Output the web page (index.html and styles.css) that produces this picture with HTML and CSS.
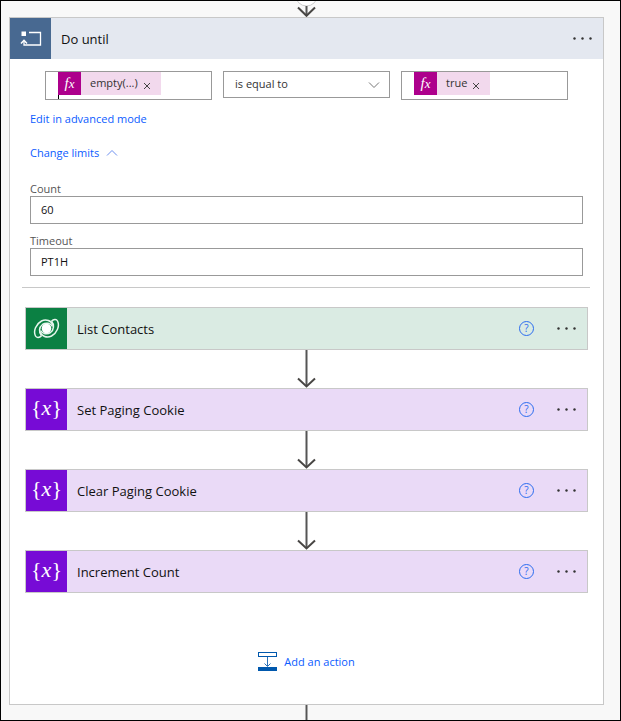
FILE: index.html
```html
<!DOCTYPE html>
<html lang="en">
<head>
  <meta charset="UTF-8" />
  <meta name="viewport" content="width=device-width, initial-scale=1.0" />
  <title>Do until</title>
  <link rel="stylesheet" href="styles.css">
</head>
<body>
<main class="canvas">

  <div class="flow-in">
    <svg width="19" height="16" viewBox="0 0 19 16">
      <circle cx="9.500" cy="-6" r="11" fill="#fff" stroke="#ccc" />
      <path d="M9.500 5v10" stroke="#555" stroke-width="2" />
      <path d="M1 6.500 9.500 14.800l8.500-8.300" fill="none" stroke="#484644" stroke-width="2" />
    </svg>
  </div>

  <section class="scope">
    <header class="scope-header">
      <span class="icon icon-loop">
        <svg width="41" height="41" viewBox="0 0 41 41">
          <path d="M19 14.500h11.500v12.500H14v-4" fill="none" stroke="#fff" stroke-width="1.300" />
          <path d="M11 25.500l3-3.200 3 3.200" fill="none" stroke="#fff" stroke-width="1.500" />
          <rect x="11.500" y="13.500" width="4.500" height="4.500" fill="#fff" />
        </svg>
      </span>
      <h1 class="title">Do until</h1>
      <button class="more" aria-label="More commands">
        <svg width="20" height="4" viewBox="0 0 20 4" fill="#333"><circle cx="1.500" cy="1.500" r="1.200" /><circle cx="9.500" cy="1.500" r="1.200" /><circle cx="17.500" cy="1.500" r="1.200" /></svg>
      </button>
    </header>

    <!-- Loop condition -->
    <div class="condition">
      <div class="token-box">
        <span class="token">
          <span class="token-fx"><i>f</i><i class="sub">x</i></span>
          <span class="token-text">empty(...)</span>
          <button class="token-remove" aria-label="Remove empty">
            <svg width="8" height="8" viewBox="0 0 8 8"><path d="M1 1l6 6M7 1l-6 6" stroke="#444" /></svg>
          </button>
        </span>
        <span class="caret"></span>
      </div>
      <div class="operator">
        <select class="operator-select" aria-label="Operator">
          <option>is equal to</option>
          <option>is not equal to</option>
        </select>
        <svg class="chevron" width="12" height="8" viewBox="0 0 12 8"><path d="M1 1.500l5 5 5-5" fill="none" stroke="#777" /></svg>
      </div>
      <div class="token-box">
        <span class="token">
          <span class="token-fx"><i>f</i><i class="sub">x</i></span>
          <span class="token-text">true</span>
          <button class="token-remove" aria-label="Remove true">
            <svg width="8" height="8" viewBox="0 0 8 8"><path d="M1 1l6 6M7 1l-6 6" stroke="#444" /></svg>
          </button>
        </span>
      </div>
    </div>

    <!-- Limits -->
    <div class="limits">
      <a class="link" href="#">Edit in advanced mode</a>
      <a class="link link-limits" href="#">Change limits
        <svg width="12" height="8" viewBox="0 0 12 8"><path d="M1 6.500l5-5 5 5" fill="none" stroke="#6d90f0" /></svg>
      </a>
      <label class="label" for="count">Count</label>
      <input class="field" type="text" id="count" value="60">
      <label class="label" for="timeout">Timeout</label>
      <input class="field" type="text" id="timeout" value="PT1H">
    </div>

    <hr class="divider">

    <!-- Actions inside the loop -->
    <div class="actions">
      <article class="action action-data">
        <span class="icon">
          <svg width="41" height="41" viewBox="0 0 41 41" fill="none" stroke="#e6f5ec" stroke-width="1.500">
            <path d="M27 17.500C25.500 12.500 20 10.800 15.500 13 10 16 7 23 9.500 28c1 2 4 1.800 6-.3" />
            <path d="M15.500 27.700c-3-3-2.500-8.700 1-11.200 3.500-2.300 8-1.500 10 2" />
            <path d="M14 23.500C15.500 28.500 21 30.200 25.500 28 31 25 34 18 31.500 13c-1-2-4-1.800-6 .3" />
            <path d="M25.500 13.300c3 3 2.500 8.700-1 11.200-3.500 2.300-8 1.500-10-2" />
            <circle cx="20.500" cy="20.500" r="4.800" fill="#fff" stroke="none" />
          </svg>
        </span>
        <h2 class="title">List Contacts</h2>
        <button class="help" aria-label="Help">?</button>
        <button class="more" aria-label="More commands">
          <svg width="20" height="4" viewBox="0 0 20 4" fill="#333"><circle cx="1.500" cy="1.500" r="1.200" /><circle cx="9.500" cy="1.500" r="1.200" /><circle cx="17.500" cy="1.500" r="1.200" /></svg>
        </button>
      </article>

      <svg class="arrow" width="19" height="38" viewBox="0 0 19 38"><path d="M9.500 0v36" stroke="#555" stroke-width="2" /><path d="M1 28.500 9.500 36.500l8.500-8" fill="none" stroke="#484644" stroke-width="2" /></svg>

      <article class="action action-variable">
        <span class="icon icon-variable">{<i>x</i>}</span>
        <h2 class="title">Set Paging Cookie</h2>
        <button class="help" aria-label="Help">?</button>
        <button class="more" aria-label="More commands">
          <svg width="20" height="4" viewBox="0 0 20 4" fill="#333"><circle cx="1.500" cy="1.500" r="1.200" /><circle cx="9.500" cy="1.500" r="1.200" /><circle cx="17.500" cy="1.500" r="1.200" /></svg>
        </button>
      </article>

      <svg class="arrow" width="19" height="38" viewBox="0 0 19 38"><path d="M9.500 0v36" stroke="#555" stroke-width="2" /><path d="M1 28.500 9.500 36.500l8.500-8" fill="none" stroke="#484644" stroke-width="2" /></svg>

      <article class="action action-variable">
        <span class="icon icon-variable">{<i>x</i>}</span>
        <h2 class="title">Clear Paging Cookie</h2>
        <button class="help" aria-label="Help">?</button>
        <button class="more" aria-label="More commands">
          <svg width="20" height="4" viewBox="0 0 20 4" fill="#333"><circle cx="1.500" cy="1.500" r="1.200" /><circle cx="9.500" cy="1.500" r="1.200" /><circle cx="17.500" cy="1.500" r="1.200" /></svg>
        </button>
      </article>

      <svg class="arrow" width="19" height="38" viewBox="0 0 19 38"><path d="M9.500 0v36" stroke="#555" stroke-width="2" /><path d="M1 28.500 9.500 36.500l8.500-8" fill="none" stroke="#484644" stroke-width="2" /></svg>

      <article class="action action-variable">
        <span class="icon icon-variable">{<i>x</i>}</span>
        <h2 class="title">Increment Count</h2>
        <button class="help" aria-label="Help">?</button>
        <button class="more" aria-label="More commands">
          <svg width="20" height="4" viewBox="0 0 20 4" fill="#333"><circle cx="1.500" cy="1.500" r="1.200" /><circle cx="9.500" cy="1.500" r="1.200" /><circle cx="17.500" cy="1.500" r="1.200" /></svg>
        </button>
      </article>
    </div>

    <button class="add-action">
      <svg width="19" height="19" viewBox="0 0 19 19">
        <rect x=".5" y=".5" width="18" height="4" fill="#fff" stroke="#0058ad" />
        <path d="M9.500 5v9M6.500 11.500l3 3 3-3" fill="none" stroke="#2a70b8" />
        <rect y="15" width="19" height="4" fill="#0058ad" />
      </svg>
      Add an action
    </button>
  </section>

  <div class="flow-out"></div>
</main>
</body>
</html>
```
FILE: styles.css
```css
* {
  box-sizing: border-box;
}
body {
  margin: 0;
  font-family: 'Open Sans', 'Noto Sans', sans-serif;
  font-size: 11px;
  color: #333;
}
button {
  padding: 0;
  border: none;
  background: none;
  font-family: inherit;
  cursor: pointer;
}
svg {
  display: block;
  flex: none;
}
.canvas {
  display: flex;
  flex-direction: column;
  min-height: 100vh;
  padding: 0 16px 0 8px;
  border: 1px solid #000;
  background: #f8f8f8;
}
.flow-in {
  display: flex;
  justify-content: center;
}
.flow-out {
  flex: 1;
  align-self: center;
  width: 3px;
  min-height: 15px;
  background: #555;
  border: solid #aaa;
  border-width: 0 1px;
}
.scope {
  border: 1px solid #c8c8c8;
  background: #fff;
}
.scope-header {
  display: flex;
  align-items: center;
  padding-right: 10px;
  background: #e4e8f0;
}
.icon {
  display: flex;
  align-items: center;
  justify-content: center;
  width: 41px;
  height: 41px;
  color: #fff;
}
.icon-loop {
  background: #486991;
}
.title {
  flex: 1;
  margin: 0;
  padding-left: 10px;
  font-size: 13px;
  font-weight: 400;
  line-height: 20px;
  color: #111;
}
.more {
  display: flex;
  align-items: center;
  height: 24px;
}

/* Condition */
.condition {
  display: grid;
  grid-template-columns: repeat(3, 1fr);
  align-items: start;
  gap: 11px;
  padding: 12px 35px 0;
}
.token-box {
  position: relative;
  height: 29px;
  padding-left: 12px;
  border: 1px solid #999;
}
.token {
  display: inline-flex;
  align-items: center;
  height: 23px;
  padding-right: 10px;
  background: #f2d9ed;
  vertical-align: top;
}
.token-fx {
  display: flex;
  align-items: baseline;
  justify-content: center;
  width: 23px;
  height: 23px;
  margin-right: 9px;
  background: #ad008c;
  color: #fff;
  font-family: 'Liberation Serif', serif;
  font-size: 15px;
  line-height: 22px;
}
.token-fx .sub {
  font-size: 13px;
}
.token-text {
  padding-bottom: 2px;
}
.token-remove {
  margin: 4px 0 0 5px;
}
.caret {
  position: absolute;
  left: 12px;
  bottom: 0;
  width: 1px;
  height: 4px;
  background: #000;
}
.operator {
  position: relative;
}
.operator-select {
  display: block;
  width: 100%;
  height: 27px;
  padding: 0 11px 2px;
  border: 1px solid #999;
  border-radius: 0;
  background: #fff;
  color: #333;
  font-family: inherit;
  font-size: 11px;
  appearance: none;
}
.chevron {
  position: absolute;
  right: 10px;
  top: 10px;
  pointer-events: none;
}

/* Limits */
.limits {
  display: flex;
  flex-direction: column;
  align-items: flex-start;
  padding: 11px 20px 0;
}
.link {
  line-height: 16px;
  color: #0b5cff;
  text-decoration: none;
}
.link-limits {
  display: flex;
  align-items: center;
  gap: 7px;
  margin: 18px 0 20px;
}
.label {
  line-height: 15px;
  color: #555;
}
.field {
  width: 100%;
  height: 28px;
  padding: 0 10px 2px;
  border: 1px solid #999;
  font-family: inherit;
  font-size: 11px;
  color: #111;
}
.field + .label {
  margin-top: 9px;
}
.divider {
  height: 1px;
  margin: 11px 13px 19px 12px;
  border: none;
  background: #c8c8c8;
}

/* Actions */
.actions {
  display: flex;
  flex-direction: column;
  padding: 0 15px;
}
.action {
  display: flex;
  align-items: center;
  padding-right: 10px;
  border: 1px solid #c8c8c8;
}
.action-data {
  background: #daebe3;
}
.action-data .icon {
  background: #0b8043;
}
.action-variable {
  background: #eadaf7;
}
.icon-variable {
  background: #770bd6;
  font-family: 'Liberation Serif', serif;
  font-size: 22px;
  line-height: 38px;
  align-items: flex-start;
}
.help {
  width: 15px;
  height: 15px;
  margin-right: 23px;
  border: 1px solid #2b6cf0;
  border-radius: 50%;
  font-size: 10px;
  line-height: 13px;
  color: #2b6cf0;
}
.arrow {
  align-self: center;
}
.add-action {
  display: flex;
  align-items: center;
  gap: 7px;
  margin: 59px auto 33px;
  font-size: 11px;
  line-height: 19px;
  color: #0b5cff;
}
```
